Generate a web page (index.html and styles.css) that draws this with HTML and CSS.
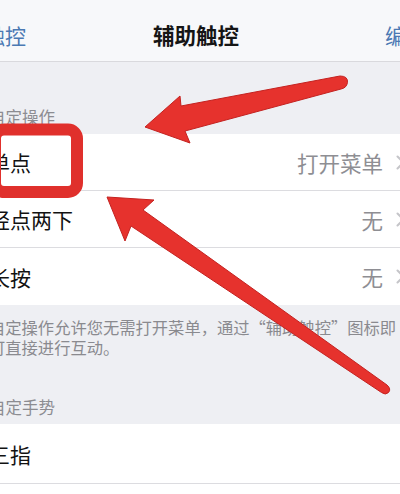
FILE: index.html
```html
<!DOCTYPE html>
<html lang="zh-CN">
<head>
<meta charset="utf-8">
<title>辅助触控</title>
<link rel="stylesheet" href="styles.css">
</head>
<body>
<div class="screen">
  <header class="nav">
    <span class="nav-back">触控</span>
    <span class="nav-title">辅助触控</span>
    <span class="nav-right">编辑</span>
  </header>

  <div class="section-header first">自定操作</div>
  <div class="group">
    <div class="row"><span class="label">单点</span><span class="value">打开菜单</span><svg class="chev" viewBox="0 0 9 15"><path d="M1.5 1.5 L7.5 7.5 L1.5 13.5"/></svg></div>
    <div class="row"><span class="label">轻点两下</span><span class="value">无</span><svg class="chev" viewBox="0 0 9 15"><path d="M1.5 1.5 L7.5 7.5 L1.5 13.5"/></svg></div>
    <div class="row"><span class="label">长按</span><span class="value">无</span><svg class="chev" viewBox="0 0 9 15"><path d="M1.5 1.5 L7.5 7.5 L1.5 13.5"/></svg></div>
  </div>
  <p class="footer">自定操作允许您无需打开菜单，通过“辅助触控”图标即可直接进行互动。</p>

  <div class="section-header second">自定手势</div>
  <div class="group">
    <div class="row tall"><span class="label">三指</span></div>
    <div class="row tall"></div>
  </div>
</div>

<svg class="marks" viewBox="0 0 400 494" width="400" height="494">
  <rect class="box" x="-5" y="129.5" width="82" height="62.5" rx="9" ry="9"/>
  <path class="arrow" d="M145 127 L180 96 L181 106 L340 76 Q348 76 347.5 82.5 Q346.5 88 341 89 L185 131 L190 143 Z"/>
  <path class="arrow" d="M107 197 L154 200 L143 210 L387 385 Q391.5 389 388.5 392.5 Q385.5 395.5 381.5 392.5 L131 226 L125 241 Z"/>
</svg>
</body>
</html>
```

FILE: styles.css
```css
html, body {
  margin: 0;
  padding: 0;
}

body {
  width: 400px;
  height: 494px;
  overflow: hidden;
  position: relative;
  background: #eeeff3;
  font-family: "Noto Sans CJK SC", "Noto Sans", sans-serif;
  color: #111;
}

.screen {
  width: 446px;
  margin-left: -27px;
}

.nav {
  box-sizing: border-box;
  height: 62px;
  padding-top: 9px;
  background: #f7f8fa;
  border-bottom: 1px solid #d9d9dd;
  display: grid;
  grid-template-columns: 1fr auto 1fr;
  align-items: center;
  font-size: 21px;
  line-height: 28px;
}

.nav-back {
  padding-left: 11px;
  color: #4b79b3;
}

.nav-title {
  font-weight: 700;
  font-size: 21.5px;
  color: #151515;
}

.nav-right {
  justify-self: end;
  margin-right: -8px;
  color: #4b79b3;
  white-space: nowrap;
}

.section-header {
  padding: 0 16px 6px;
  font-size: 16.5px;
  line-height: 22px;
  color: #8c8c91;
}

.section-header.first {
  padding-top: 44px;
}

.section-header.second {
  padding-top: 39px;
}

.group {
  background: #fff;
}

.row {
  box-sizing: border-box;
  height: 57px;
  padding: 0 14px 0 16px;
  display: flex;
  align-items: center;
  border-bottom: 1px solid #dcdce0;
  font-size: 21px;
}

.group > .row:last-child {
  border-bottom: none;
}

.row.tall {
  height: 60px;
}

.label {
  color: #121212;
}

.value {
  margin-left: auto;
  color: #8e8e93;
  font-size: 21.5px;
}

.chev {
  width: 9px;
  height: 15px;
  margin-left: 13px;
  fill: none;
  stroke: #c5c5c9;
  stroke-width: 2;
  stroke-linecap: round;
  stroke-linejoin: round;
}

.footer {
  margin: 0;
  padding: 13px 16px 0;
  font-size: 16.3px;
  line-height: 19.5px;
  color: #8a8a8f;
}

.marks {
  position: absolute;
  top: 0;
  left: 0;
  pointer-events: none;
}

.box {
  fill: none;
  stroke: #e0302c;
  stroke-width: 12;
}

.arrow {
  fill: #e6322d;
  stroke: #c42220;
  stroke-width: 1;
  stroke-linejoin: round;
}
```
